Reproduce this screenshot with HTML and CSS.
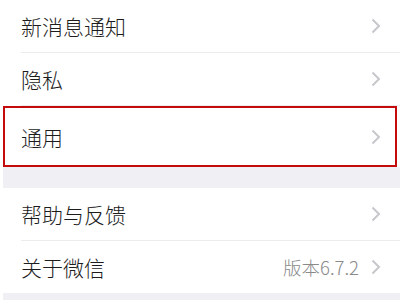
FILE: index.html
```html
<!DOCTYPE html>
<html lang="zh-CN">
<head>
    <meta charset="UTF-8">
    <meta name="viewport" content="width=device-width, initial-scale=1.0">
    <title>设置</title>
    <link rel="stylesheet" href="styles.css">
</head>
<body>
    <div class="settings">
        <div class="group">
            <div class="cell">
                <div class="cell-body">
                    <span class="cell-title">新消息通知</span>
                    <svg class="arrow" width="10" height="16" viewBox="0 0 10 16"><polyline points="1.5,1.5 8,8 1.5,14.5"/></svg>
                </div>
            </div>
            <div class="cell">
                <div class="cell-body">
                    <span class="cell-title">隐私</span>
                    <svg class="arrow" width="10" height="16" viewBox="0 0 10 16"><polyline points="1.5,1.5 8,8 1.5,14.5"/></svg>
                </div>
            </div>
            <div class="cell cell-marked">
                <div class="cell-body">
                    <span class="cell-title">通用</span>
                    <svg class="arrow" width="10" height="16" viewBox="0 0 10 16"><polyline points="1.5,1.5 8,8 1.5,14.5"/></svg>
                </div>
            </div>
        </div>

        <div class="group-gap"></div>

        <div class="group">
            <div class="cell">
                <div class="cell-body">
                    <span class="cell-title">帮助与反馈</span>
                    <svg class="arrow" width="10" height="16" viewBox="0 0 10 16"><polyline points="1.5,1.5 8,8 1.5,14.5"/></svg>
                </div>
            </div>
            <div class="cell">
                <div class="cell-body no-line">
                    <span class="cell-title">关于微信</span>
                    <span class="cell-value">版本6.7.2</span>
                    <svg class="arrow" width="10" height="16" viewBox="0 0 10 16"><polyline points="1.5,1.5 8,8 1.5,14.5"/></svg>
                </div>
            </div>
        </div>

        <div class="group-gap"></div>
    </div>
</body>
</html>
```

FILE: styles.css
```css
body {
    margin: 0;
    background: #fff;
    font-family: "Noto Sans CJK SC", "Noto Sans", sans-serif;
    color: #1c1c1c;
}

.settings {
    margin-left: 3px;
}

.group {
    background: #fff;
}

.group-gap {
    height: 21px;
    background: #efeff4;
}

.cell {
    padding-left: 18px;
}

.cell-body {
    display: flex;
    align-items: center;
    height: 52px;
    padding-right: 19px;
    border-bottom: 1px solid #ececec;
}

.cell-body.no-line {
    border-bottom: none;
}

/* 红框标注的一行 */
.cell-marked {
    margin-right: 3px;
    padding-left: 16px;
    border: 2px solid #c40a0a;
}

.cell-marked .cell-body {
    height: 57px;
    padding-right: 14px;
    border-bottom: none;
}

.cell-title {
    flex: 1;
    font-size: 21px;
    font-weight: 300;
}

.cell-value {
    font-size: 18.5px;
    font-weight: 300;
    color: #8a8a8a;
    margin-right: 12px;
}

.arrow {
    display: block;
    flex-shrink: 0;
}

.arrow polyline {
    fill: none;
    stroke: #c7c7cc;
    stroke-width: 2;
}
```
